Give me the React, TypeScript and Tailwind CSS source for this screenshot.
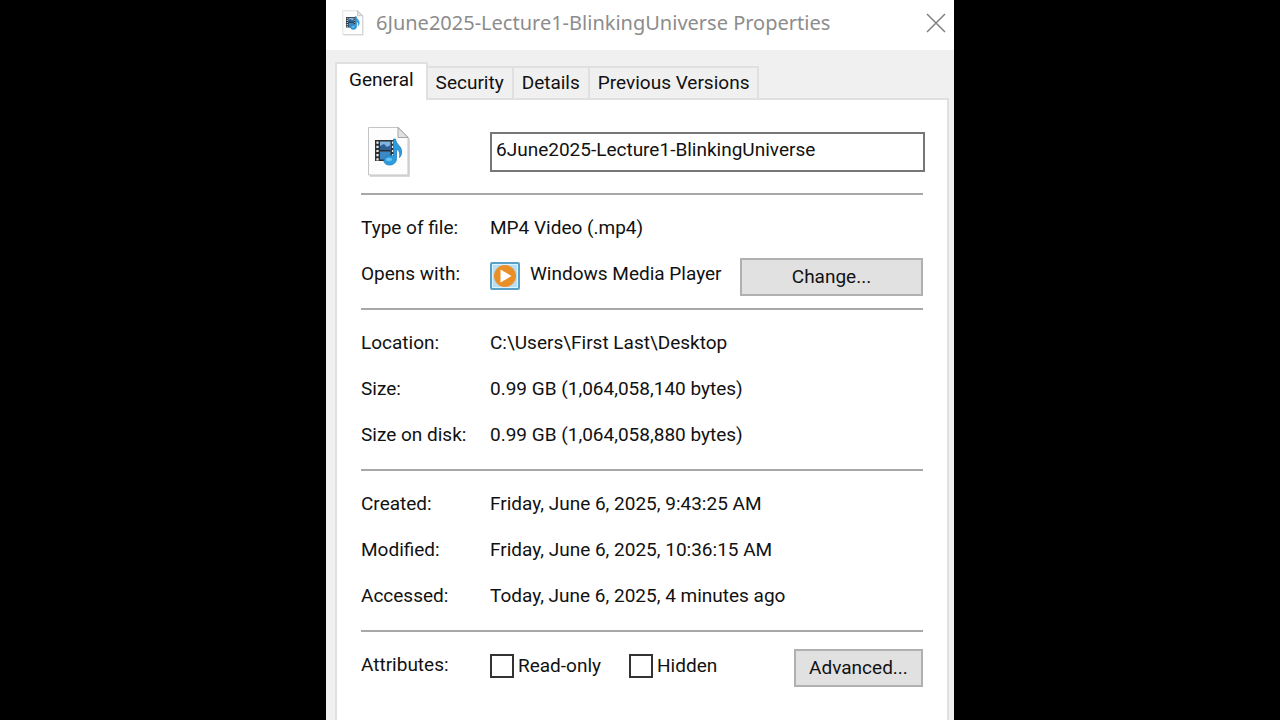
import { useState } from "react";
import type { ReactNode } from "react";

function MediaFileIcon({ className }: { className: string }) {
  return (
    <svg viewBox="0 0 44 52" className={className} aria-hidden="true">
      <path d="M3 3H33L43 13V51H3Z" fill="#d9d9d9" />
      <path d="M1.500 1.500H31.500L41 11V49H1.500Z" fill="#fdfdfd" stroke="#c4c4c4" />
      <path d="M31 1.500V11.500H41Z" fill="#e2e2e2" stroke="#a6a6a6" />
      <rect x="8" y="14" width="20" height="21" fill="#2b2f33" />
      <rect x="13" y="15.500" width="10.500" height="8.500" fill="#7fb4e0" />
      <path d="M13 24V20L17 18L20 21L23.500 19V24Z" fill="#2d5f93" />
      <rect x="13" y="25.500" width="10.500" height="8" fill="#3c87c4" />
      <path
        d="M10.500 15.500V35M26 15.500V35"
        stroke="#f1f1f1"
        strokeWidth="2.200"
        strokeDasharray="2.200 2"
      />
      <path
        d="M28.500 13C29 19 35.500 20 34.500 27C34.300 29 33.500 30.500 32.500 31.500C33.500 26 31.500 24 29.500 23.500V32.500C29.500 36.500 26.500 39 22.500 39C18.500 39 16.500 36.500 17 34C17.500 30.500 22 29 26.500 30V13Z"
        fill="#2e9bdd"
        stroke="#1c7fc0"
        strokeWidth="0.800"
      />
      <ellipse cx="22" cy="33.500" rx="3" ry="1.700" fill="#6cc4f2" />
    </svg>
  );
}

function PlayerIcon() {
  return (
    <svg viewBox="0 0 30 28" className="mt-1 h-7 w-[30px] shrink-0" aria-hidden="true">
      <rect x="1" y="1" width="28" height="26" rx="1" fill="#b5dff5" stroke="#5a9fc8" strokeWidth="2" />
      <rect x="2.500" y="2.500" width="25" height="23" fill="none" stroke="#dff2fb" />
      <circle cx="15" cy="14" r="11" fill="#ea8f28" />
      <path d="M10.500 7.500L21.500 14L10.500 20.500Z" fill="#fff" />
    </svg>
  );
}

function Row({ label, children }: { label: string; children: ReactNode }) {
  return (
    <div className="flex h-[46px] items-center">
      <dt className="w-[129px] shrink-0">{label}</dt>
      <dd className="flex min-w-0 flex-1 items-center">{children}</dd>
    </div>
  );
}

function Section({ children }: { children: ReactNode }) {
  return <dl className="border-t-2 border-[#a8a8a8] pt-2.5 pb-[11px]">{children}</dl>;
}

const tabs = ["General", "Security", "Details", "Previous Versions"];

const buttonStyle = "mt-1.5 h-[38px] border-2 border-[#b0b0b0] bg-[#e1e1e1] text-center";

function Attribute({ id, label }: { id: string; label: string }) {
  return (
    <div className="flex items-center gap-1">
      <input
        id={id}
        type="checkbox"
        className="size-6 appearance-none border-2 border-[#333] bg-white checked:bg-[#0078d7]"
      />
      <label htmlFor={id}>{label}</label>
    </div>
  );
}

export default function App() {
  const [active, setActive] = useState("General");
  return (
    <div className="flex h-screen justify-center overflow-hidden bg-black">
      <main className="flex w-full max-w-[628px] flex-col bg-[#f0f0f0] font-['Roboto','Liberation_Sans',sans-serif] text-[19px] leading-6 text-[#111]">
        <header className="flex h-[50px] shrink-0 items-center bg-white pr-2 pb-1 pl-4">
          <MediaFileIcon className="h-[26px] w-[22px]" />
          <h1 className="ml-3 flex-1 font-['Noto_Sans','Open_Sans',sans-serif] text-[20px] text-[#8c8c8c]">
            6June2025-Lecture1-BlinkingUniverse Properties
          </h1>
          <button type="button" aria-label="Close">
            <svg viewBox="0 0 20 20" className="size-5" aria-hidden="true">
              <path d="M1 1L19 19M19 1L1 19" stroke="#808080" strokeWidth="1.500" />
            </svg>
          </button>
        </header>

        <div role="tablist" className="mt-3 ml-[9px] flex h-9 shrink-0 items-end">
          {tabs.map((tab) => (
            <button
              key={tab}
              type="button"
              role="tab"
              aria-selected={tab === active}
              onClick={() => setActive(tab)}
              className={
                tab === active
                  ? "z-10 -mb-0.5 h-[38px] border-2 border-b-0 border-[#e0e0e0] bg-white px-3 pb-1"
                  : "h-8 border-t-2 border-r-2 border-[#e0e0e0] px-2"
              }
            >
              {tab}
            </button>
          ))}
        </div>

        <div className="mr-[5px] ml-[9px] flex-1 border-2 border-b-0 border-[#e0e0e0] bg-white px-6">
          <div className="-mr-0.5 flex h-[93px] items-center pt-2.5">
            <div className="w-[129px] shrink-0 pl-1.5">
              <MediaFileIcon className="h-[52px] w-11" />
            </div>
            <input
              type="text"
              aria-label="File name"
              defaultValue="6June2025-Lecture1-BlinkingUniverse"
              className="h-10 min-w-0 flex-1 border-2 border-[#777] bg-white px-1 pb-1 outline-none"
            />
          </div>

          <Section>
            <Row label="Type of file:">MP4 Video (.mp4)</Row>
            <Row label="Opens with:">
              <PlayerIcon />
              <span className="ml-2.5 flex-1">Windows Media Player</span>
              <button type="button" className={`${buttonStyle} w-[183px]`}>
                Change...
              </button>
            </Row>
          </Section>
          <Section>
            <Row label="Location:">C:\Users\First Last\Desktop</Row>
            <Row label="Size:">0.99 GB (1,064,058,140 bytes)</Row>
            <Row label="Size on disk:">0.99 GB (1,064,058,880 bytes)</Row>
          </Section>
          <Section>
            <Row label="Created:">Friday, June 6, 2025, 9:43:25 AM</Row>
            <Row label="Modified:">Friday, June 6, 2025, 10:36:15 AM</Row>
            <Row label="Accessed:">Today, June 6, 2025, 4 minutes ago</Row>
          </Section>
          <Section>
            <Row label="Attributes:">
              <div className="flex flex-1 gap-7 pt-0.5">
                <Attribute id="read-only" label="Read-only" />
                <Attribute id="hidden" label="Hidden" />
              </div>
              <button type="button" className={`${buttonStyle} w-[129px]`}>
                Advanced...
              </button>
            </Row>
          </Section>
        </div>
      </main>
    </div>
  );
}
